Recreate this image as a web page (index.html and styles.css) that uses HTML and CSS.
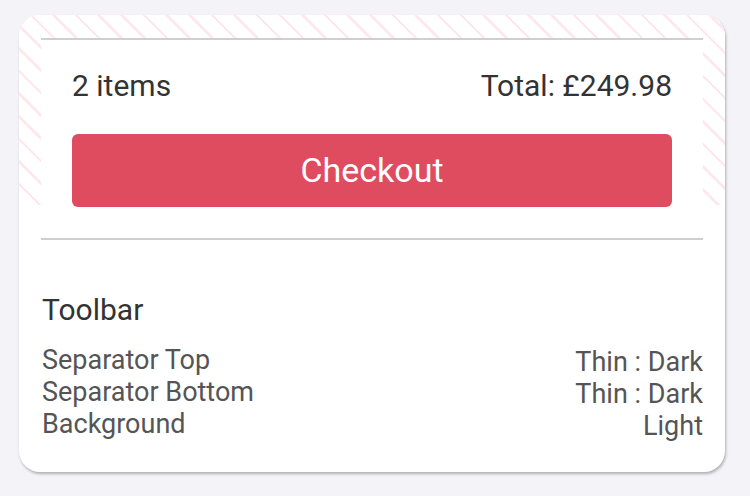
FILE: index.html
```html
<!DOCTYPE html>
<html>
<head>
<meta charset="utf-8">
<link rel="stylesheet" href="styles.css">
</head>
<body>
<div class="card">
  <div class="demo">
    <div class="toolbar">
      <div class="summary">
        <span class="count">2 items</span>
        <span class="total">Total: £249.98</span>
      </div>
      <button class="checkout">Checkout</button>
    </div>
  </div>
  <div class="info">
    <div class="title">Toolbar</div>
    <div class="props">
      <div class="prop"><span class="k">Separator Top</span><span class="v">Thin : Dark</span></div>
      <div class="prop"><span class="k">Separator Bottom</span><span class="v">Thin : Dark</span></div>
      <div class="prop"><span class="k">Background</span><span class="v">Light</span></div>
    </div>
  </div>
</div>
</body>
</html>
```
FILE: styles.css
```css
html, body {
  margin: 0;
  padding: 0;
  background: #f3f3f8;
  font-family: Roboto, "Liberation Sans", sans-serif;
}
body {
  padding: 15px 0 0 19px;
  height: 496px;
  box-sizing: border-box;
}
.card {
  width: 706px;
  height: 457px;
  box-sizing: border-box;
  background: #fff;
  border-radius: 21px;
  box-shadow: 1px 2px 3px rgba(0,0,0,0.28);
  overflow: hidden;
}
.demo {
  padding: 23px 22px 0;
  background-color: #fff;
  background-image: repeating-linear-gradient(45deg, transparent 0, transparent 13.5px, #fde9ed 13.5px, #fde9ed 16px);
  background-size: 100% 190px;
  background-repeat: no-repeat;
}
.toolbar {
  background: #fff;
  border-top: 2px solid #cfcfcf;
  border-bottom: 2px solid #cfcfcf;
  padding: 30px 31px 31px;
}
.summary {
  display: flex;
  justify-content: space-between;
  align-items: center;
  font-size: 30px;
  line-height: 32px;
  color: #333;
}
.checkout {
  display: block;
  width: 100%;
  height: 73px;
  margin-top: 32px;
  border: none;
  border-radius: 6px;
  background: #df4b5f;
  color: #fff;
  font-family: Roboto, "Liberation Sans", sans-serif;
  font-size: 34px;
  font-weight: 400;
  padding: 0 0 2px;
}
.info {
  padding: 54px 22px 0 23px;
}
.title {
  font-size: 30px;
  line-height: 32px;
  color: #333;
}
.props {
  margin-top: 18px;
}
.prop {
  display: flex;
  justify-content: space-between;
  font-size: 27px;
  line-height: 32px;
  color: #555;
}
.prop .v {
  position: relative;
  top: 2px;
}
```
